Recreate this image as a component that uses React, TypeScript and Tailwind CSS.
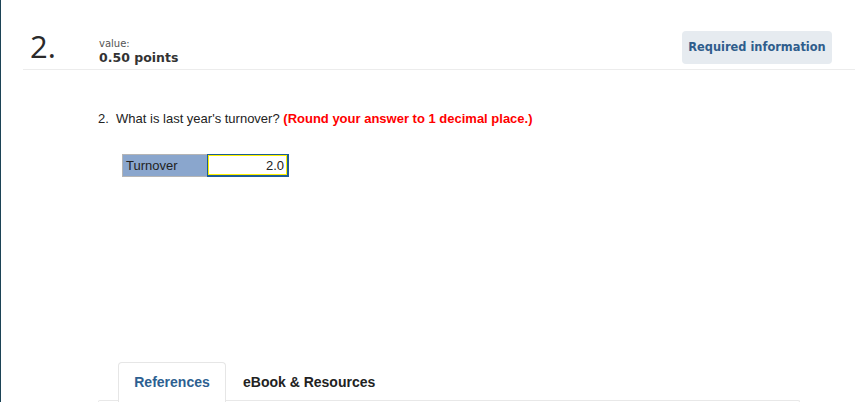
export default function App() {
  return (
    <div className="h-[402px] w-[855px] overflow-hidden bg-white flex">
      <div className="w-px bg-[#1c4356] shrink-0" />
      <div className="flex-1 flex flex-col pl-[22px]">
        <header className="h-[70px] border-b border-[#ececec] flex items-start pt-[31px] pr-[23px]">
          <div className="w-[76px] pl-[7px] -mt-[2px] text-[31px] leading-[34px] text-[#2a2a2a] font-['Open_Sans',sans-serif]">2.</div>
          <div className="flex flex-col font-['DejaVu_Sans',sans-serif]">
            <span className="text-[10px] leading-[12px] text-[#555] mt-[7px]">value:</span>
            <span className="text-[12.5px] leading-[16px] font-bold text-[#333]">0.50 points</span>
          </div>
          <div className="ml-auto h-[33px] w-[150px] rounded bg-[#e6ebf0] flex items-center justify-center text-[11.4px] font-bold text-[#2f5d8c] font-['DejaVu_Sans',sans-serif]">
            Required information
          </div>
        </header>
        <main className="flex-1 flex flex-col pl-[75px] font-['Liberation_Sans',Arial,sans-serif]">
          <p className="mt-[41px] text-[13px] leading-[16px] text-[#222]">
            2.&nbsp;&nbsp;What is last year's turnover?{' '}
            <span className="font-bold text-[#f00]">(Round your answer to 1 decimal place.)</span>
          </p>
          <div className="mt-[27px] ml-[24px] flex h-[23px] w-[167px] text-[13px]">
            <div className="w-[85px] bg-[#8aa6cd] border border-[#b5b5b5] border-r-0 pl-[3px] leading-[21px] text-[#222]">Turnover</div>
            <div className="flex-1 border-b-2 border-r-2 border-t border-l border-[#1c5c96] bg-white">
              <div className="h-full border border-[#fff200] text-right pr-[2px] leading-[19px] text-[#222]">2.0</div>
            </div>
          </div>
          <div className="mt-auto relative h-[40px]">
            <div className="absolute left-0 right-[55px] bottom-0 h-[2px] border border-b-0 border-[#e8e8e8] rounded-t" />
            <div className="relative flex h-full pl-[20px] text-[14px] font-bold font-['Liberation_Sans',Arial,sans-serif]">
              <div className="w-[108px] h-full bg-white border border-b-0 border-[#e6e6e6] rounded-t flex items-center justify-center text-[#2d5f91]">References</div>
              <div className="pl-[17px] h-full flex items-center text-[#222]">eBook &amp; Resources</div>
            </div>
          </div>
        </main>
      </div>
    </div>
  );
}
